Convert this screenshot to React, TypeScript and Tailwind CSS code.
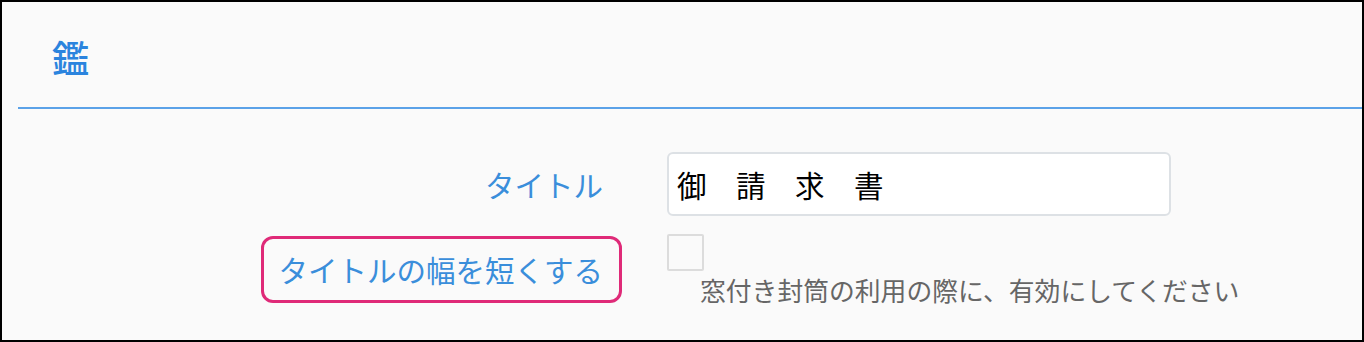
import React from "react";

export default function App() {
  return (
    <div
      className="w-[1364px] h-[342px] border-2 border-black bg-[#fafafa] overflow-hidden"
      style={{ fontFamily: '"Noto Sans CJK JP", "Noto Sans", sans-serif' }}
    >
      <div className="ml-[16px] h-[107px] border-b-2 border-[#5ba2e8] pl-[34px] pt-[35px]">
        <h1 className="text-[37px] leading-[40px] text-[#2b84de] font-medium">鑑</h1>
      </div>
      <div className="grid grid-cols-[620px_auto] gap-x-[45px] pt-[43px]">
        <div className="flex items-center justify-end pr-[19px] h-[64px]">
          <span className="text-[29.5px] text-[#3a8edb]">タイトル</span>
        </div>
        <div className="w-[504px] h-[64px] rounded-[6px] border-2 border-[#dde1e5] bg-white flex items-center pl-[8px]">
          <span className="text-[29.5px] text-black tracking-[0px]">御　請　求　書</span>
        </div>
        <div className="flex justify-end mt-[20px]">
          <div className="h-[67px] border-[3px] border-[#df2a78] rounded-[12px] pl-[14px] pr-[16px] flex items-center">
            <span className="text-[29.5px] text-[#3a8edb]">タイトルの幅を短くする</span>
          </div>
        </div>
        <div className="mt-[18px] flex flex-col">
          <div className="w-[37px] h-[37px] border-2 border-[#dcdcdc] rounded-[2px] bg-[#fafafa]" />
          <div className="ml-[33px] mt-[3px] text-[25.8px] leading-[32px] text-[#666666] whitespace-nowrap">
            窓付き封筒の利用の際に、有効にしてください
          </div>
        </div>
      </div>
    </div>
  );
}
